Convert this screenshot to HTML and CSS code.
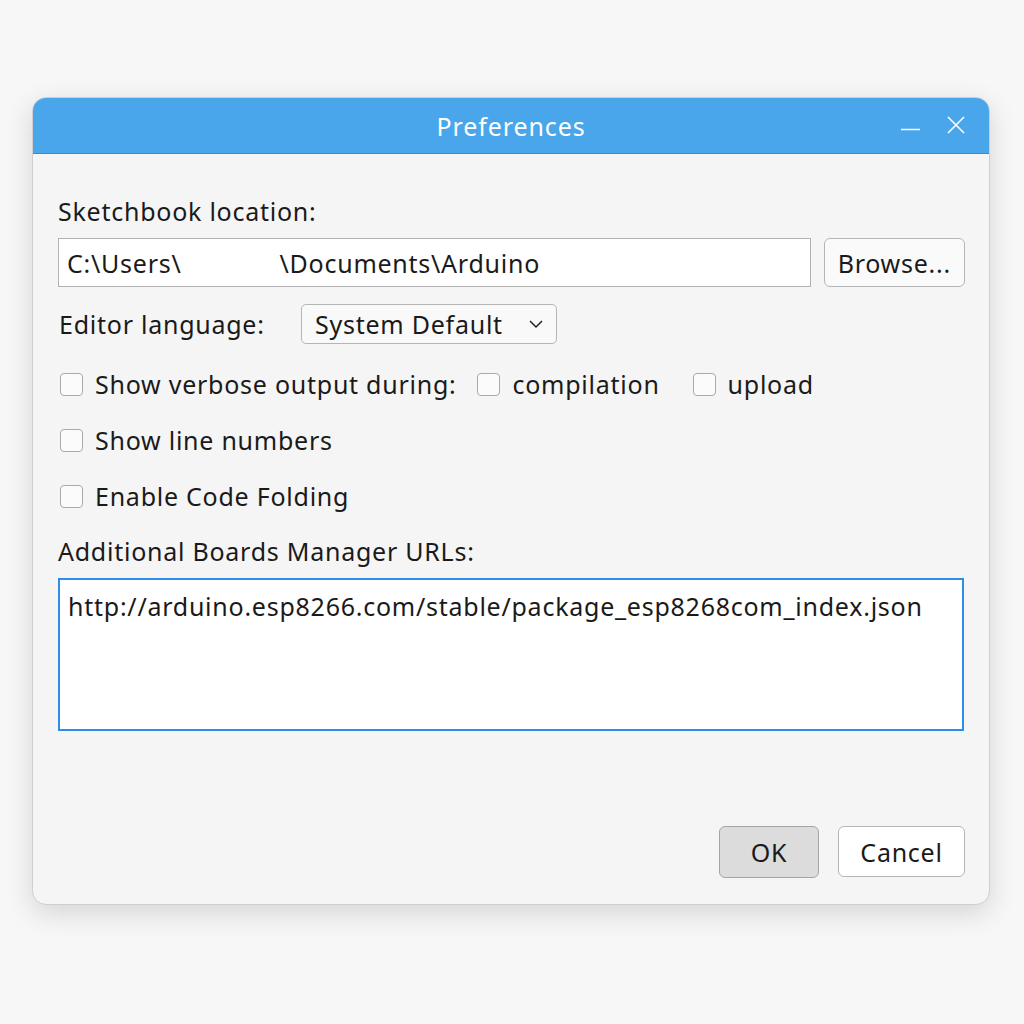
FILE: index.html
```html
<!DOCTYPE html>
<html>
<head>
<meta charset="utf-8">
<link rel="stylesheet" href="styles.css">
</head>
<body>
<div class="dialog">
  <div class="titlebar">
    <span class="title">Preferences</span>
    <div class="controls">
      <svg class="min" width="22" height="22" viewBox="0 0 22 22"><path d="M2 15.5H21" stroke="#fff" stroke-width="1.6"/></svg>
      <svg class="close" width="22" height="22" viewBox="0 0 22 22"><path d="M3 3L19 19M19 3L3 19" stroke="#fff" stroke-width="1.6"/></svg>
    </div>
  </div>
  <div class="content">
    <div class="label first">Sketchbook location:</div>
    <div class="path-row">
      <div class="input"><span>C:\Users\</span><span class="gap"></span><span>\Documents\Arduino</span></div>
      <div class="btn browse">Browse...</div>
    </div>
    <div class="lang-row">
      <span class="lang-label">Editor language:</span>
      <div class="select"><span>System Default</span>
        <svg width="16" height="10" viewBox="0 0 16 10"><path d="M2 2L8 8L14 2" fill="none" stroke="#222" stroke-width="1.5"/></svg>
      </div>
    </div>
    <div class="check-row verbose">
      <span class="box"></span><span class="ctext">Show verbose output during:</span>
      <span class="box b2"></span><span class="ctext">compilation</span>
      <span class="box b3"></span><span class="ctext">upload</span>
    </div>
    <div class="check-row">
      <span class="box"></span><span class="ctext">Show line numbers</span>
    </div>
    <div class="check-row">
      <span class="box"></span><span class="ctext">Enable Code Folding</span>
    </div>
    <div class="label urls">Additional Boards Manager URLs:</div>
    <div class="textarea">http://arduino.esp8266.com/stable/package_esp8268com_index.json</div>
    <div class="footer">
      <div class="btn ok">OK</div>
      <div class="btn cancel">Cancel</div>
    </div>
  </div>
</div>
</body>
</html>
```
FILE: styles.css
```css
html {
  background: #f7f7f7;
}
body {
  margin: 0;
  padding: 97px 0 0 32px;
  min-height: 100vh;
  box-sizing: border-box;
  font-family: "Noto Sans", "DejaVu Sans", sans-serif;
  color: #1a1a1a;
}
.dialog {
  width: 956px;
  height: 806px;
  background: #f5f5f5;
  border: 1px solid #cfcfcf;
  border-radius: 14px;
  overflow: hidden;
  box-shadow: 0 8px 28px rgba(0,0,0,0.14);
  display: flex;
  flex-direction: column;
}
.titlebar {
  height: 55px;
  flex: none;
  background: #4aa6ea;
  border-bottom: 1px solid #2f8fdc;
  position: relative;
  display: flex;
  align-items: center;
  justify-content: center;
}
.title {
  color: #fff;
  font-size: 25px;
  letter-spacing: 0.9px;
  margin-top: 1px;
}
.controls {
  position: absolute;
  right: 22px;
  top: 16px;
  display: flex;
  gap: 24px;
}
.content {
  flex: 1;
  padding: 0 24px 0 25px;
  display: flex;
  flex-direction: column;
  font-size: 25px;
  letter-spacing: 0.75px;
}
.label {
  height: 32px;
  line-height: 32px;
}
.label.first {
  margin-top: 41px;
}
.path-row {
  display: flex;
  margin-top: 11px;
  gap: 13px;
}
.input {
  width: 746px;
  height: 47px;
  background: #fff;
  border: 1px solid #b2b2b2;
  display: flex;
  align-items: center;
  padding-left: 8px;
  box-sizing: content-box;
}
.input .gap {
  width: 98px;
}
.btn {
  display: flex;
  align-items: center;
  justify-content: center;
  background: #fafafa;
  border: 1px solid #b5b5b5;
  border-radius: 6px;
  box-sizing: border-box;
}
.browse {
  width: 142px;
  height: 49px;
}
.lang-row {
  display: flex;
  align-items: center;
  margin-top: 17px;
  height: 40px;
}
.lang-label {
  width: 242px;
  padding-left: 1px;
}
.select {
  width: 256px;
  height: 40px;
  box-sizing: border-box;
  border: 1px solid #b5b5b5;
  border-radius: 5px;
  background: #f9f9f9;
  display: flex;
  align-items: center;
  justify-content: space-between;
  padding: 0 12px 0 13px;
}
.check-row {
  display: flex;
  align-items: center;
  height: 32px;
  margin-top: 24px;
}
.box {
  width: 23px;
  height: 23px;
  box-sizing: border-box;
  border: 1px solid #a9a9a9;
  border-radius: 4px;
  background: #fbfbfb;
  margin-left: 2px;
  margin-right: 12px;
  flex: none;
}
.box.b2 {
  margin-left: 21px;
}
.box.b3 {
  margin-left: 33px;
}
.label.urls {
  margin-top: 23px;
}
.textarea {
  margin-top: 11px;
  width: 906px;
  height: 153px;
  box-sizing: border-box;
  border: 2px solid #2b8ee8;
  background: #fff;
  padding: 10px 8px;
  line-height: 32px;
  white-space: nowrap;
}
.footer {
  display: flex;
  justify-content: flex-end;
  gap: 19px;
  margin-top: 95px;
}
.ok {
  width: 100px;
  height: 52px;
  background: #dcdcdc;
  border-color: #a5a5a5;
}
.cancel {
  width: 127px;
  height: 51px;
  background: #fff;
}
```
